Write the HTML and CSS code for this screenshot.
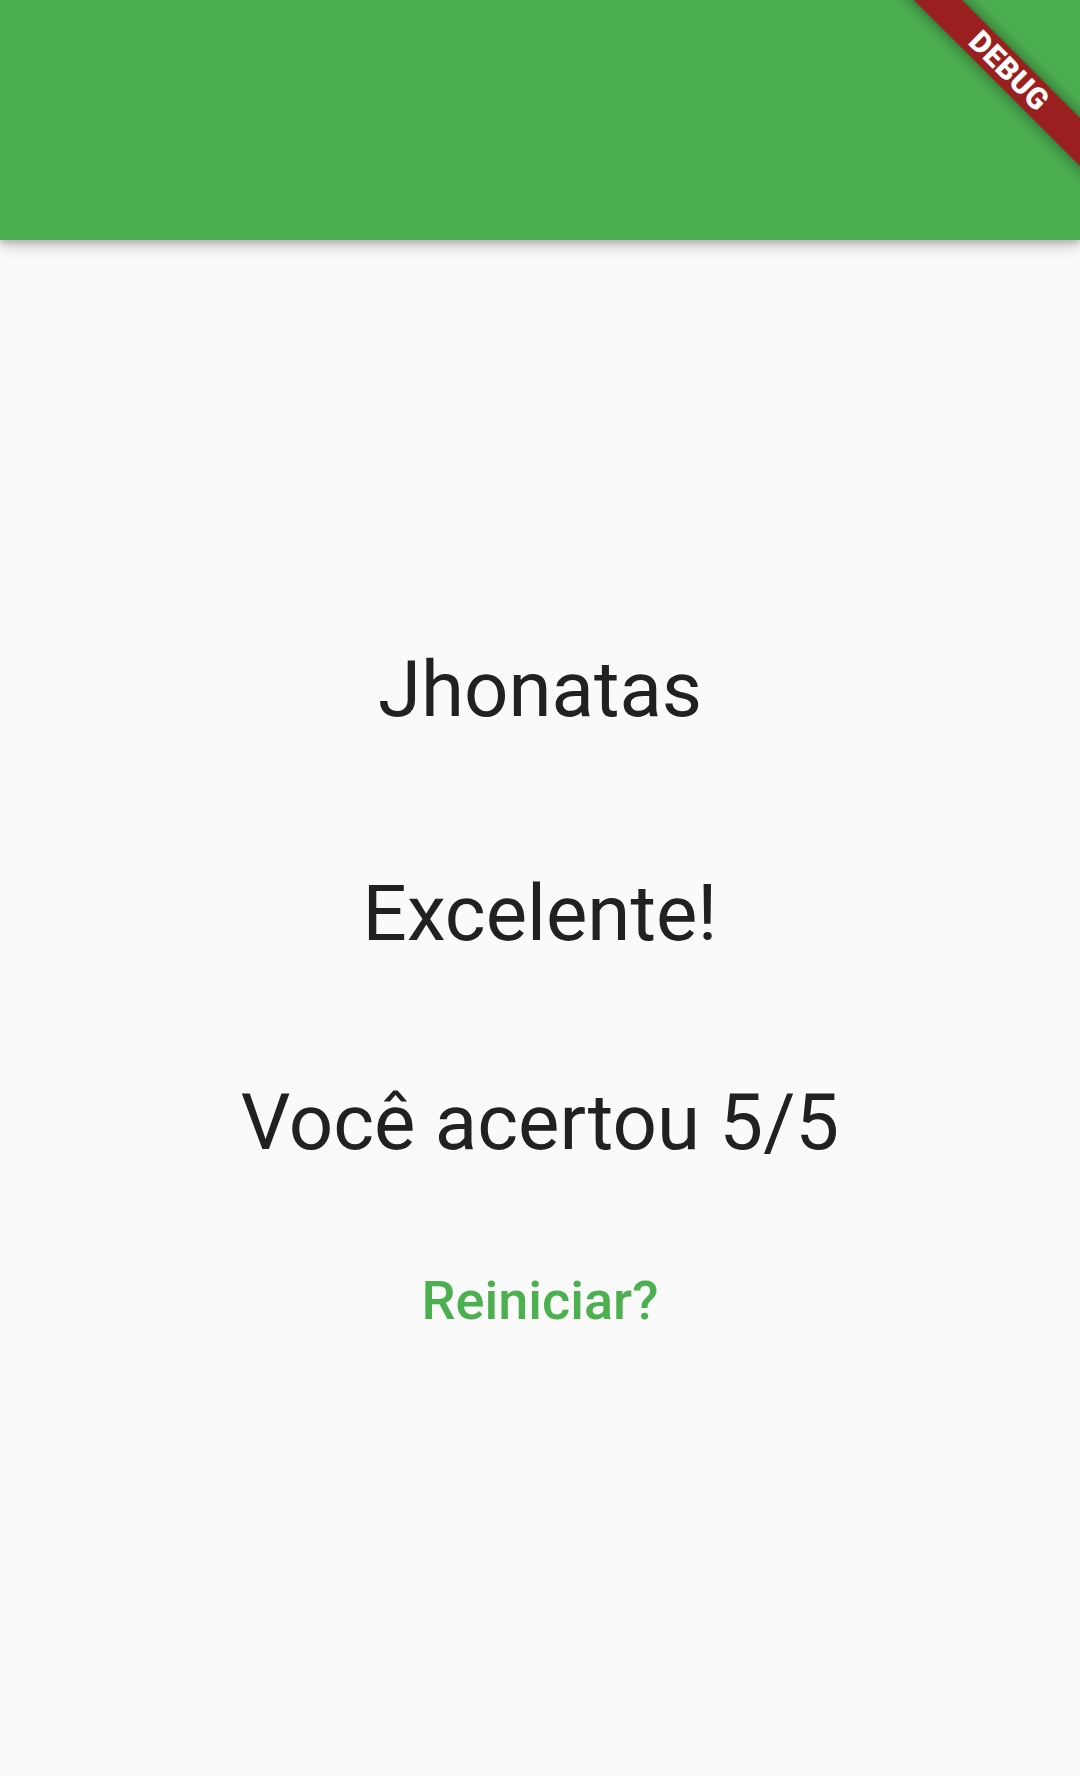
FILE: index.html
```html
<!DOCTYPE html>
<html lang="pt">
<head>
<meta charset="utf-8">
<title>Quiz</title>
<link rel="stylesheet" href="styles.css">
</head>
<body>
<header class="app-bar"></header>
<main class="result">
  <div class="headline name">Jhonatas</div>
  <div class="headline verdict">Excelente!</div>
  <div class="headline score">Você acertou 5/5</div>
  <button class="restart" type="button">Reiniciar?</button>
</main>
<div class="banner-clip"><div class="debug-ribbon">DEBUG</div></div>
</body>
</html>
```

FILE: styles.css
```css
html, body {
  margin: 0;
  padding: 0;
}
body {
  width: 1080px;
  height: 1776px;
  background: #fafafa;
  font-family: Roboto, "Noto Sans", sans-serif;
  overflow: hidden;
  position: relative;
}
.app-bar {
  height: 240px;
  background: #4caf50;
  box-shadow: 0 4px 6px rgba(0,0,0,0.16), 0 8px 14px rgba(0,0,0,0.10), 0 2px 20px rgba(0,0,0,0.08);
  position: relative;
  z-index: 1;
}
.result {
  display: flex;
  flex-direction: column;
  align-items: center;
  padding-top: 404px;
}
.headline {
  font-size: 78px;
  line-height: normal;
  color: #212121;
  font-weight: 400;
}
.name { margin-bottom: 133px; }
.verdict { margin-bottom: 118px; }
.score { margin-bottom: 101px; }
.restart {
  border: 0;
  background: none;
  padding: 0;
  font-family: Roboto, "Noto Sans", sans-serif;
  font-size: 54px;
  line-height: normal;
  font-weight: 500;
  color: #4caf50;
}
.banner-clip {
  position: absolute;
  top: 0;
  right: 0;
  width: 200px;
  height: 200px;
  overflow: hidden;
  z-index: 2;
}
.debug-ribbon {
  position: absolute;
  left: -21px;
  top: 54px;
  width: 300px;
  height: 34px;
  background: #99201f;
  box-shadow: 0 0 16px rgba(0,0,0,0.5);
  transform: rotate(45deg);
  color: #fff;
  font-family: Roboto, "Noto Sans", sans-serif;
  font-weight: 900;
  font-size: 30px;
  line-height: 34px;
  text-align: center;
  letter-spacing: 0.5px;
}
```
